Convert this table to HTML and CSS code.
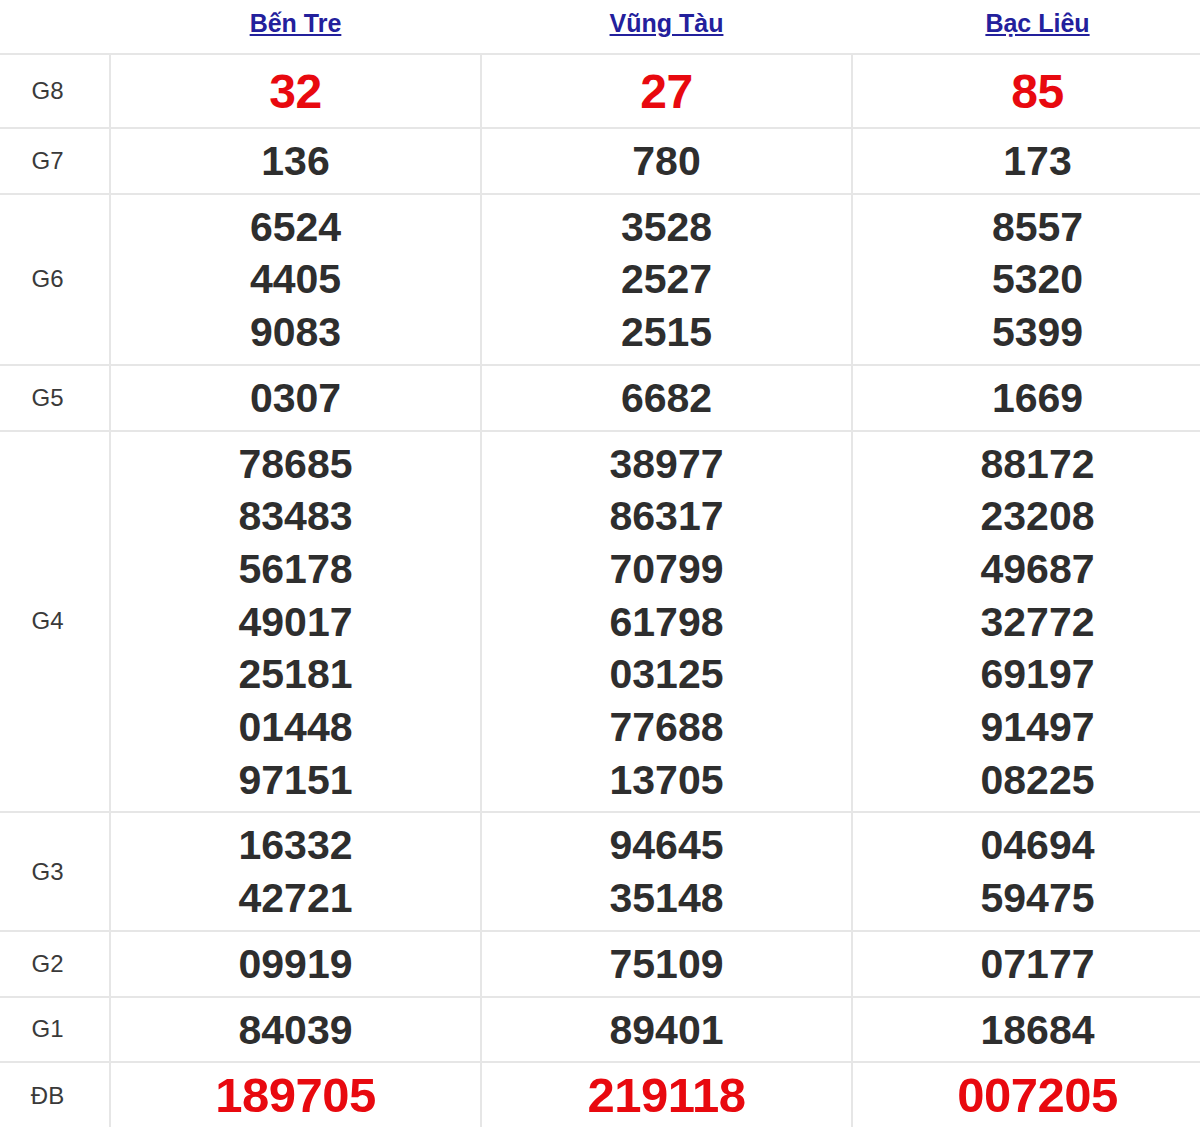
FILE: index.html
```html
<!DOCTYPE html>
<html lang="vi">
<head>
<meta charset="utf-8">
<title>Kết quả xổ số</title>
<link rel="stylesheet" href="styles.css">
</head>
<body>
<table class="kq">
  <colgroup>
    <col class="c-lbl"><col class="c-prov"><col class="c-prov"><col class="c-prov">
  </colgroup>
  <thead>
    <tr class="head">
      <th></th>
      <th><a href="#">Bến Tre</a></th>
      <th><a href="#">Vũng Tàu</a></th>
      <th><a href="#">Bạc Liêu</a></th>
    </tr>
  </thead>
  <tbody>
    <tr class="g8">
      <td class="lbl">G8</td>
      <td class="num red">32</td><td class="num red">27</td><td class="num red">85</td>
    </tr>
    <tr>
      <td class="lbl">G7</td>
      <td class="num">136</td><td class="num">780</td><td class="num">173</td>
    </tr>
    <tr>
      <td class="lbl">G6</td>
      <td class="num">6524<br>4405<br>9083</td>
      <td class="num">3528<br>2527<br>2515</td>
      <td class="num">8557<br>5320<br>5399</td>
    </tr>
    <tr>
      <td class="lbl">G5</td>
      <td class="num">0307</td><td class="num">6682</td><td class="num">1669</td>
    </tr>
    <tr>
      <td class="lbl">G4</td>
      <td class="num">78685<br>83483<br>56178<br>49017<br>25181<br>01448<br>97151</td>
      <td class="num">38977<br>86317<br>70799<br>61798<br>03125<br>77688<br>13705</td>
      <td class="num">88172<br>23208<br>49687<br>32772<br>69197<br>91497<br>08225</td>
    </tr>
    <tr>
      <td class="lbl">G3</td>
      <td class="num">16332<br>42721</td>
      <td class="num">94645<br>35148</td>
      <td class="num">04694<br>59475</td>
    </tr>
    <tr>
      <td class="lbl">G2</td>
      <td class="num">09919</td><td class="num">75109</td><td class="num">07177</td>
    </tr>
    <tr>
      <td class="lbl">G1</td>
      <td class="num">84039</td><td class="num">89401</td><td class="num">18684</td>
    </tr>
    <tr class="db">
      <td class="lbl">ĐB</td>
      <td class="num red">189705</td><td class="num red">219118</td><td class="num red">007205</td>
    </tr>
  </tbody>
</table>
</body>
</html>
```

FILE: styles.css
```css
html, body {
  margin: 0;
  padding: 0;
  overflow: hidden;
  background: #fff;
}

body {
  font-family: "Liberation Sans", Arial, sans-serif;
  color: #333;
}

.kq {
  border-collapse: collapse;
  table-layout: fixed;
  width: 1223px;
}

.c-lbl { width: 110px; }
.c-prov { width: 371px; }

.head th {
  padding: 9px 0 15px;
  font-size: 25px;
  font-weight: bold;
  line-height: 29px;
  text-align: center;
  border-bottom: 2px solid #e6e6e6;
}

.head a {
  color: #23209c;
  text-decoration: underline;
}

td {
  border: 2px solid #e6e6e6;
  text-align: center;
  vertical-align: middle;
}

tr td:first-child { border-left: none; }

.lbl {
  font-size: 24px;
  color: #3a3a3a;
  padding: 0 14px 0 0;
}

.num {
  font-size: 41px;
  font-weight: bold;
  line-height: 52.7px;
  color: #2e2e2e;
  padding: 6px 0 5px;
}

.num.red {
  color: #e8090f;
  font-size: 48px;
  letter-spacing: -0.5px;
}

.g8 .num {
  line-height: 53px;
  padding: 10px 0 9px;
}

.db .num {
  font-size: 49px;
  padding: 6px 0 7px;
}
```
